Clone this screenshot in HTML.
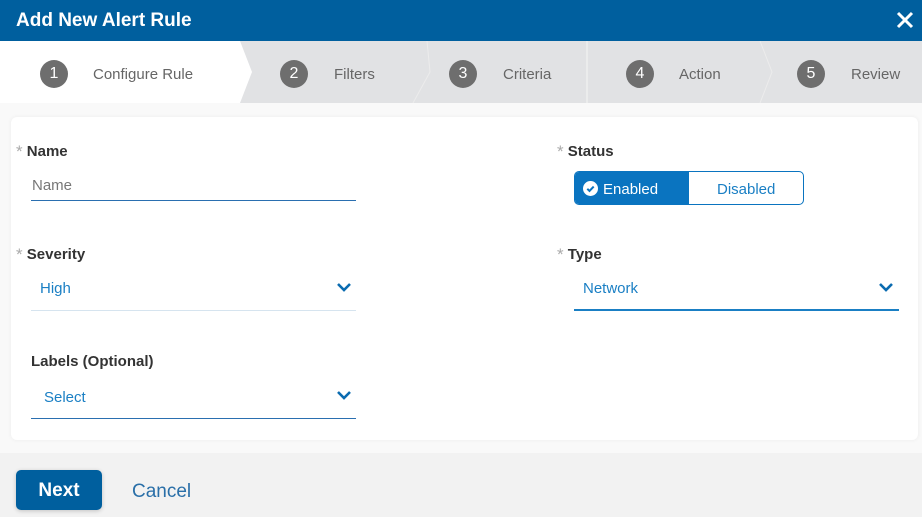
<!DOCTYPE html>
<html><head><meta charset="utf-8"><style>
*{margin:0;padding:0;box-sizing:border-box}
body{width:922px;height:517px;overflow:hidden;background:#f9f9f9;font-family:"Segoe UI","Liberation Sans",sans-serif;position:relative}
.a{position:absolute;white-space:nowrap}
.hdr{left:0;top:0;width:922px;height:41px;background:#005f9e;color:#fff;font-weight:bold;font-size:19px;padding:10px 0 0 16px}
.num{width:28px;height:28px;border-radius:50%;background:#6e6e6e;color:#fff;font-size:16px;text-align:center;line-height:28px}
.st{font-size:15px;color:#666}
.card{left:11px;top:117px;width:907px;height:323px;background:#fff;border-radius:6px;box-shadow:0 0 4px rgba(0,0,0,.06)}
.lbl{font-size:15px;font-weight:bold;color:#333}
.ast{color:#aaa;font-size:17px;font-weight:normal;position:relative;top:1px}
.line{height:1px;width:325px}
.val{font-size:15px;color:#1a7fc4}
.chev{width:16px;height:10px}
.foot{left:0;top:453px;width:922px;height:64px;background:#f2f2f2}
</style></head><body>
<div class="a hdr">Add New Alert Rule</div>
<svg class="a" style="left:896px;top:11px" width="18" height="18" viewBox="0 0 18 18"><path d="M2 2L16 16M16 2L2 16" stroke="#fff" stroke-width="3"/></svg>
<svg class="a" style="left:0;top:41px" width="922" height="62">
<rect width="922" height="62" fill="#e1e2e4"/>
<polygon points="0,0 240,0 252,31 240,62 0,62" fill="#fff"/>
<path d="M427,0 L430,31 L413,62" stroke="#ececec" fill="none"/>
<path d="M587,0 L587,62" stroke="#f5f5f5"/>
<path d="M760,0 L772,31 L760,62" stroke="#ececec" fill="none"/>
</svg>
<div class="a num" style="left:40px;top:60px">1</div><div class="a st" style="left:93px;top:66px">Configure Rule</div>
<div class="a num" style="left:280px;top:60px">2</div><div class="a st" style="left:334px;top:66px">Filters</div>
<div class="a num" style="left:449px;top:60px">3</div><div class="a st" style="left:503px;top:66px">Criteria</div>
<div class="a num" style="left:626px;top:60px">4</div><div class="a st" style="left:679px;top:66px">Action</div>
<div class="a num" style="left:797px;top:60px">5</div><div class="a st" style="left:851px;top:66px">Review</div>
<div class="a card"></div>
<div class="a lbl" style="left:16px;top:141px"><span class="ast">*</span> Name</div>
<div class="a" style="left:32px;top:177px;font-size:15px;color:#777">Name</div>
<div class="a line" style="left:31px;top:200px;background:#2a6fb0"></div>
<div class="a lbl" style="left:557px;top:141px"><span class="ast">*</span> Status</div>
<div class="a" style="left:574px;top:171px;width:230px;height:34px;border:1px solid #0a74c0;border-radius:5px;overflow:hidden">
<div class="a" style="left:0;top:0;width:114px;height:32px;background:#0a74c0"></div>
<svg class="a" style="left:8px;top:9px" width="15" height="15"><circle cx="7.5" cy="7.5" r="7.5" fill="#fff"/><path d="M4.3 7.8L6.5 10L10.7 5.6" stroke="#0a74c0" stroke-width="2" fill="none"/></svg>
<div class="a" style="left:28px;top:9px;font-size:15px;color:#fff">Enabled</div>
<div class="a" style="left:142px;top:9px;font-size:15px;color:#1a7fc4">Disabled</div>
</div>
<div class="a lbl" style="left:16px;top:244px"><span class="ast">*</span> Severity</div>
<div class="a val" style="left:40px;top:280px">High</div>
<svg class="a chev" style="left:336px;top:282px" viewBox="0 0 16 10"><path d="M2 2L8 8L14 2" stroke="#0a6bb0" stroke-width="2.6" fill="none"/></svg>
<div class="a line" style="left:31px;top:310px;background:#d6e4ef"></div>
<div class="a lbl" style="left:557px;top:244px"><span class="ast">*</span> Type</div>
<div class="a val" style="left:583px;top:280px">Network</div>
<svg class="a chev" style="left:878px;top:282px" viewBox="0 0 16 10"><path d="M2 2L8 8L14 2" stroke="#0a6bb0" stroke-width="2.6" fill="none"/></svg>
<div class="a line" style="left:574px;top:309px;background:#1a7fc4;height:2px"></div>
<div class="a lbl" style="left:31px;top:353px">Labels (Optional)</div>
<div class="a val" style="left:44px;top:389px">Select</div>
<svg class="a chev" style="left:336px;top:390px" viewBox="0 0 16 10"><path d="M2 2L8 8L14 2" stroke="#0a6bb0" stroke-width="2.6" fill="none"/></svg>
<div class="a line" style="left:31px;top:418px;background:#2a6fb0"></div>
<div class="a foot"></div>
<div class="a" style="left:16px;top:470px;width:86px;height:40px;background:#005f9e;border-radius:5px;color:#fff;font-weight:bold;font-size:19px;text-align:center;line-height:42px;box-shadow:0 1px 4px rgba(0,0,0,.2)">Next</div>
<div class="a" style="left:132px;top:481px;font-size:19px;color:#2a6fa8">Cancel</div>
</body></html>
